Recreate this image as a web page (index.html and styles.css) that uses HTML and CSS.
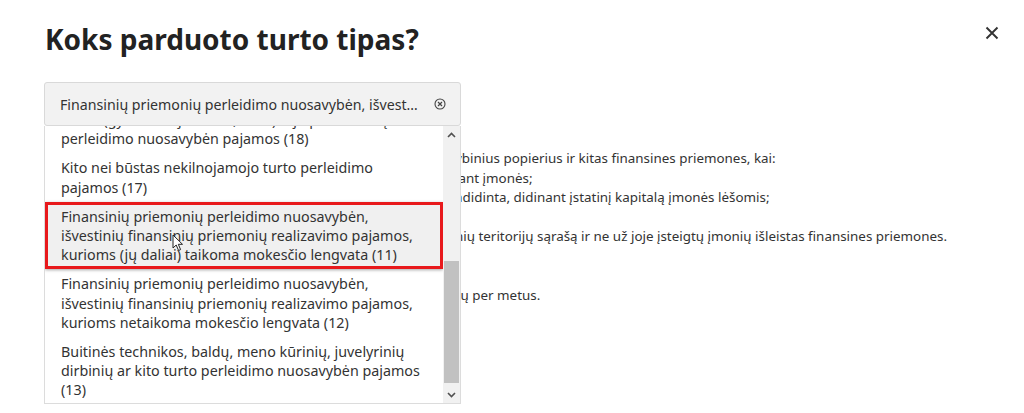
FILE: index.html
```html
<!DOCTYPE html>
<html lang="lt">
<head>
    <meta charset="UTF-8">
    <title>Koks parduoto turto tipas?</title>
    <link rel="stylesheet" href="styles.css">
</head>
<body>
    <div class="modal">
        <button class="close" aria-label="Uždaryti">
            <svg width="14" height="14" viewBox="0 0 14 14"><path d="M1.5 1.5L12.5 12.5M12.5 1.5L1.5 12.5" stroke="#333" stroke-width="1.9" fill="none"/></svg>
        </button>
        <h1 class="title">Koks parduoto turto tipas?</h1>

        <div class="picker">
            <div class="select">
                <span class="select-value">Finansinių priemonių perleidimo nuosavybėn, išvestinių finansinių priemonių realizavimo pajamos, kurioms (jų daliai) taikoma mokesčio lengvata (11)</span>
                <svg class="clear" width="12" height="12" viewBox="0 0 12 12">
                    <circle cx="6" cy="6" r="5" stroke="#444" stroke-width="1.1" fill="none"/>
                    <path d="M4 4L8 8M8 4L4 8" stroke="#444" stroke-width="1.2"/>
                </svg>
            </div>

            <div class="menu">
                <div class="options">
                    <ul class="options-list">
                        <li class="option">Būsto (gyvenamojo namo, buto) ir jo priklausinių perleidimo nuosavybėn pajamos (18)</li>
                        <li class="option">Kito nei būstas nekilnojamojo turto perleidimo pajamos (17)</li>
                        <li class="option active">Finansinių priemonių perleidimo nuosavybėn, išvestinių finansinių priemonių realizavimo pajamos, kurioms (jų daliai) taikoma mokesčio lengvata (11)</li>
                        <li class="option">Finansinių priemonių perleidimo nuosavybėn, išvestinių finansinių priemonių realizavimo pajamos, kurioms netaikoma mokesčio lengvata (12)</li>
                        <li class="option">Buitinės technikos, baldų, meno kūrinių, juvelyrinių dirbinių ar kito turto perleidimo nuosavybėn pajamos (13)</li>
                    </ul>
                    <svg class="pointer" width="12" height="18" viewBox="0 0 12 18">
                        <path d="M1 1V14L4.2 11L6.6 16.5L8.6 15.6L6.3 10.3H10.5Z" fill="#fff" stroke="#222" stroke-width="1"/>
                    </svg>
                </div>
                <div class="scrollbar">
                    <div class="scroll-btn">
                        <svg width="9" height="6" viewBox="0 0 9 6"><path d="M1 5L4.5 1.5L8 5" stroke="#505050" stroke-width="1.6" fill="none"/></svg>
                    </div>
                    <div class="scroll-track">
                        <div class="scroll-thumb"></div>
                    </div>
                    <div class="scroll-btn">
                        <svg width="9" height="6" viewBox="0 0 9 6"><path d="M1 1L4.5 4.5L8 1" stroke="#505050" stroke-width="1.6" fill="none"/></svg>
                    </div>
                </div>
            </div>
        </div>

        <div class="info">
            <div class="info-line"><span class="cut">Lengvata taikoma pajamoms, gautoms perleidus nuosavybėn vert</span><span>ybinius popierius ir kitas finansines priemones, kai:</span></div>
            <div class="info-line"><span class="cut">– akcijos įgytos reorganizuojant ar likviduo</span><span>jant įmonės;</span></div>
            <div class="info-line"><span class="cut">– akcijų nominali vertė buvo p</span><span>adidinta, didinant įstatinį kapitalą įmonės lėšomis;</span></div>
            <div class="info-line empty"></div>
            <div class="info-line"><span class="cut">Lengvata netaikoma, jei įsigytos valstybėse, įtrauktos į tiksli</span><span>nių teritorijų sąrašą ir ne už joje įsteigtų įmonių išleistas finansines priemones.</span></div>
            <div class="info-line empty"></div>
            <div class="info-line empty"></div>
            <div class="info-line"><span class="cut">Neapmokestinama pajamų dalis – ne daugiau kaip 500 eu</span><span>rų per metus.</span></div>
        </div>
    </div>
</body>
</html>
```

FILE: styles.css
```css
html, body {
    height: 100%;
}

body {
    margin: 0;
    background-color: #fff;
    font-family: "Noto Sans", "Open Sans", sans-serif;
    color: #333;
}

.modal {
    position: relative;
    box-sizing: border-box;
    min-height: 100%;
    padding: 16px 44px 0 44px;
}

.close {
    position: absolute;
    top: 26px;
    right: 25px;
    border: none;
    background: none;
    padding: 0;
    width: 14px;
    height: 14px;
    cursor: pointer;
}

.title {
    margin: 0 0 0 1px;
    font-size: 28px;
    font-weight: 700;
    line-height: 46px;
    color: #222;
}

.picker {
    position: relative;
    width: 417px;
    margin-top: 20px;
}

.select {
    display: flex;
    align-items: center;
    height: 42px;
    padding: 0 14px 0 15px;
    background: #f2f2f2;
    border: 1px solid #d9d9d9;
    border-radius: 3px;
}

    .select .select-value {
        flex: 1;
        min-width: 0;
        font-size: 14.2px;
        white-space: nowrap;
        overflow: hidden;
        text-overflow: ellipsis;
        padding-right: 16px;
    }

    .select .clear {
        flex: none;
    }

.menu {
    position: absolute;
    left: 0;
    right: 0;
    top: 44px;
    height: 277px;
    display: flex;
    background: #fff;
    border: 1px solid #dcdcdc;
    border-top: none;
    z-index: 2;
}

.options {
    position: relative;
    flex: 1;
    overflow: hidden;
}

.options-list {
    list-style: none;
    margin: -21px 0 0 0;
    padding: 0;
}

.option {
    padding: 5px 16px 5px 16px;
    font-size: 14.3px;
    line-height: 19.2px;
}

    .option.active {
        background: #f0f0f0;
        outline: 3px solid #e8191c;
        outline-offset: -3px;
        box-shadow: 0 1px 3px rgba(0,0,0,0.35);
    }

.pointer {
    position: absolute;
    left: 127px;
    top: 108px;
}

.scrollbar {
    width: 17px;
    display: flex;
    flex-direction: column;
    background: #f1f1f1;
}

.scroll-btn {
    height: 17px;
    display: flex;
    align-items: center;
    justify-content: center;
}

.scroll-track {
    flex: 1;
    display: flex;
    flex-direction: column;
    justify-content: flex-end;
}

.scroll-thumb {
    height: 122px;
    margin: 0 1px 3px 1px;
    background: #c1c1c1;
}

.info {
    margin-top: 23px;
    font-size: 13.4px;
    line-height: 19.5px;
}

.info-line {
    display: flex;
    white-space: nowrap;
}

    .info-line.empty {
        height: 19.5px;
    }

    .info-line .cut {
        flex: none;
        width: 411px;
        display: flex;
        justify-content: flex-end;
        overflow: hidden;
    }
```
